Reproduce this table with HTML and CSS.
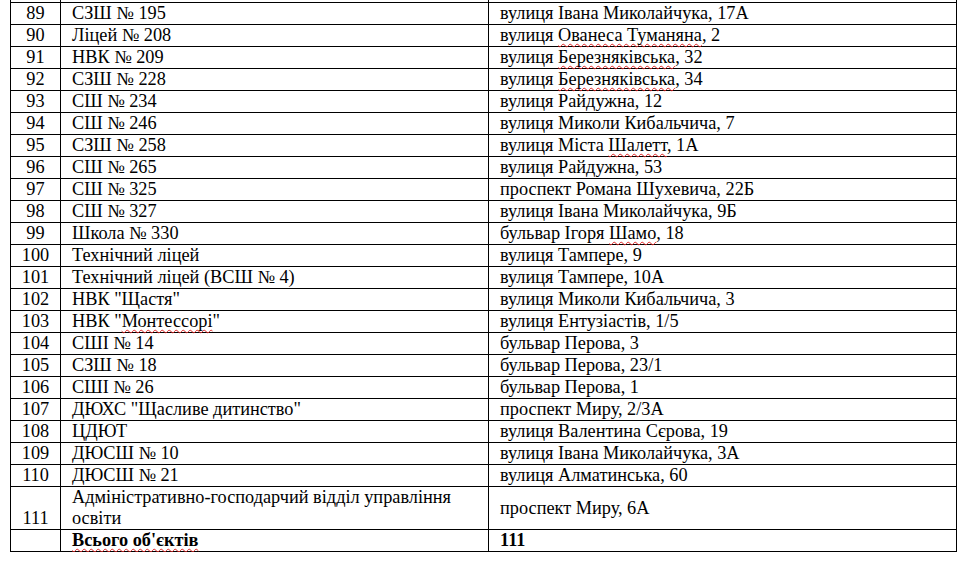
FILE: index.html
```html
<!DOCTYPE html>
<html lang="uk">
<head>
<meta charset="utf-8">
<title>Перелік об'єктів</title>
<link rel="stylesheet" href="styles.css">
</head>
<body>
<div class="doc">
<table class="list">
<colgroup><col class="c-num"><col class="c-name"><col class="c-addr"></colgroup>
<tbody>
<tr class="cut"><td class="num">88</td><td>СЗШ № 194</td><td>вулиця Бальзака Оноре, 4у,</td></tr>
<tr><td class="num">89</td><td>СЗШ № 195</td><td>вулиця Івана Миколайчука, 17А</td></tr>
<tr><td class="num">90</td><td>Ліцей № 208</td><td>вулиця <span class="sp">Ованеса Туманяна</span>, 2</td></tr>
<tr><td class="num">91</td><td>НВК № 209</td><td>вулиця <span class="sp">Березняківська</span>, 32</td></tr>
<tr><td class="num">92</td><td>СЗШ № 228</td><td>вулиця <span class="sp">Березняківська</span>, 34</td></tr>
<tr><td class="num">93</td><td>СШ № 234</td><td>вулиця Райдужна, 12</td></tr>
<tr><td class="num">94</td><td>СШ № 246</td><td>вулиця Миколи Кибальчича, 7</td></tr>
<tr><td class="num">95</td><td>СЗШ № 258</td><td>вулиця Міста <span class="sp">Шалетт</span>, 1А</td></tr>
<tr><td class="num">96</td><td>СШ № 265</td><td>вулиця Райдужна, 53</td></tr>
<tr><td class="num">97</td><td>СШ № 325</td><td>проспект Романа Шухевича, 22Б</td></tr>
<tr><td class="num">98</td><td>СШ № 327</td><td>вулиця Івана Миколайчука, 9Б</td></tr>
<tr><td class="num">99</td><td>Школа № 330</td><td>бульвар Ігоря <span class="sp">Шамо</span>, 18</td></tr>
<tr><td class="num">100</td><td>Технічний ліцей</td><td>вулиця Тампере, 9</td></tr>
<tr><td class="num">101</td><td>Технічний ліцей (ВСШ № 4)</td><td>вулиця Тампере, 10А</td></tr>
<tr><td class="num">102</td><td>НВК "Щастя"</td><td>вулиця Миколи Кибальчича, 3</td></tr>
<tr><td class="num">103</td><td>НВК "<span class="sp">Монтессорі</span>"</td><td>вулиця Ентузіастів, 1/5</td></tr>
<tr><td class="num">104</td><td>СШІ № 14</td><td>бульвар Перова, 3</td></tr>
<tr><td class="num">105</td><td>СЗШ № 18</td><td>бульвар Перова, 23/1</td></tr>
<tr><td class="num">106</td><td>СШІ № 26</td><td>бульвар Перова, 1</td></tr>
<tr><td class="num">107</td><td>ДЮХС "Щасливе дитинство"</td><td>проспект Миру, 2/3А</td></tr>
<tr><td class="num">108</td><td>ЦДЮТ</td><td>вулиця Валентина Сєрова, 19</td></tr>
<tr><td class="num">109</td><td>ДЮСШ № 10</td><td>вулиця Івана Миколайчука, 3А</td></tr>
<tr><td class="num">110</td><td>ДЮСШ № 21</td><td>вулиця Алматинська, 60</td></tr>
<tr class="tall"><td class="num bottom">111</td><td>Адміністративно-господарчий відділ управління освіти</td><td class="middle">проспект Миру, 6А</td></tr>
<tr class="total"><td class="num"></td><td><span class="sp">Всього об'єктів</span></td><td>111</td></tr>
</tbody>
</table>
</div>
</body>
</html>
```

FILE: styles.css
```css
html, body {
  margin: 0;
  padding: 0;
  background: #ffffff;
}

body {
  font-family: "Liberation Serif", serif;
  font-size: 18.3px;
  color: #000000;
}

.doc {
  margin-top: -20px;
  padding-left: 10px;
}

.list {
  border-collapse: collapse;
  table-layout: fixed;
  width: 946px;
  font-family: "Liberation Serif", serif;
  font-size: 18.3px;
}

.c-num { width: 50px; }
.c-name { width: 428px; }
.c-addr { width: 468px; }

.list td {
  border: 1px solid #000000;
  padding: 0 4px 0 11px;
  line-height: 21px;
  height: 21px;
  vertical-align: top;
}

.list td.num {
  text-align: center;
  padding-left: 0;
  padding-right: 0;
}

.cut td {
  color: transparent;
}

.list td.bottom {
  vertical-align: bottom;
}

.list td.middle {
  vertical-align: middle;
}

.total td {
  font-weight: bold;
}

.sp {
  text-decoration: underline wavy #e02424;
  text-decoration-thickness: 1px;
  text-underline-offset: 2px;
  text-decoration-skip-ink: none;
}
```
